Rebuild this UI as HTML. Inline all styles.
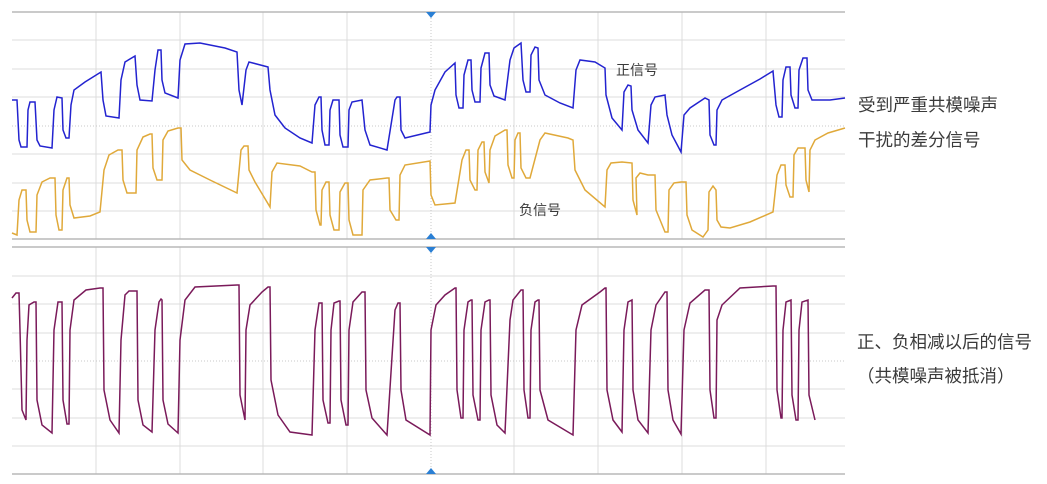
<!DOCTYPE html>
<html><head><meta charset="utf-8"><style>
html,body{margin:0;padding:0;background:#fff;width:1047px;height:484px;overflow:hidden}
svg{display:block}
text{font-family:"Liberation Sans","Noto Sans CJK SC",sans-serif;fill:#3a3a3a}
</style></head><body>
<svg width="1047" height="484" viewBox="0 0 1047 484" xmlns="http://www.w3.org/2000/svg">
<g stroke="#dcdcdc" stroke-width="1" fill="none">
<path d="M96 12V239M180 12V239M263 12V239M347 12V239M514 12V239M598 12V239M682 12V239M766 12V239"/>
<path d="M96 247V474M180 247V474M263 247V474M347 247V474M514 247V474M598 247V474M682 247V474M766 247V474"/>
<path d="M12 40H845M12 69H845M12 97H845M12 154H845M12 183H845M12 211H845"/>
<path d="M12 276H845M12 304H845M12 333H845M12 389H845M12 418H845M12 446H845"/>
</g>
<g stroke="#b8b8b8" stroke-width="1.5" fill="none">
<path d="M12 12H845M12 239H845M12 247H845M12 474H845"/>
</g>
<g stroke="#c8c8c8" stroke-width="1" stroke-dasharray="1 2" fill="none">
<path d="M12 126H845M12 361H845M431 12V239M431 247V474"/>
</g>
<g fill="#2a7fd4">
<path d="M426 12h10l-5 6z"/><path d="M426 239h10l-5 -6z"/>
<path d="M426 247h10l-5 6z"/><path d="M426 474h10l-5 -6z"/>
</g>
<polyline fill="none" stroke="#2323d0" stroke-width="1.5" points="12,100 17,100 19,140 21,147 27,147 28,110 30,102 35,102 37,140 40,146 52,148 54,110 57,97 62,98 63,130 66,138 69,138 71,105 74,90 85,82 101,72 103,100 106,116 119,118 121,80 125,62 135,56 137,85 140,100 152,101 155,70 158,50 161,50 162,80 165,93 178,98 180,60 185,44 200,43 225,48 237,52 239,90 242,105 246,70 249,62 268,67 270,90 275,115 285,128 300,138 312,143 315,105 319,97 321,97 322,130 325,145 329,145 330,110 333,100 339,100 340,135 343,147 348,147 349,110 352,102 362,100 365,130 370,145 387,150 395,100 397,97 400,97 401,130 405,138 430,132 431,105 435,90 445,72 455,63 456,95 459,108 463,108 464,75 468,60 471,60 472,90 475,102 480,102 481,68 485,53 489,53 490,85 494,96 505,100 510,60 514,48 521,43 523,80 526,92 530,92 531,55 535,47 538,48 539,80 545,95 560,103 573,108 576,70 580,60 595,62 605,68 606,95 612,118 622,130 624,92 628,85 631,86 632,110 638,130 648,143 651,105 655,97 665,95 667,115 672,135 681,152 684,115 690,108 705,98 709,100 710,135 714,145 716,145 717,110 722,100 740,90 760,79 773,71 776,105 779,117 782,117 783,80 786,67 790,67 791,95 795,108 798,108 799,70 803,58 807,58 808,90 812,100 830,100 845,98"/>
<polyline fill="none" stroke="#e0a93a" stroke-width="1.5" points="12,233 17,235 19,200 22,190 26,190 27,220 30,232 36,232 37,195 42,182 50,178 55,178 56,215 59,230 62,230 63,190 67,178 69,178 70,205 74,218 90,216 100,212 104,170 109,155 118,150 122,150 123,180 127,193 136,193 137,150 143,137 150,134 152,134 153,168 157,180 162,180 163,140 168,131 178,128 181,128 182,160 190,170 210,180 237,193 241,150 244,146 248,146 249,170 255,182 270,207 272,172 277,163 300,166 312,172 315,172 316,210 320,225 321,225 322,190 326,182 329,182 330,215 334,230 339,230 340,192 345,183 348,183 349,220 353,235 362,235 363,190 370,180 387,178 389,178 390,210 396,220 399,220 400,175 405,165 430,161 431,195 435,205 455,203 462,160 466,150 469,150 470,180 475,190 477,190 478,150 482,142 484,142 485,172 489,183 490,150 495,136 505,130 507,130 508,165 512,178 514,178 515,140 518,133 520,133 521,168 526,178 530,178 540,140 545,133 568,138 573,140 575,170 585,190 605,207 607,170 611,163 622,162 632,163 633,200 637,215 636,178 640,173 648,175 655,175 656,210 665,232 668,232 669,190 674,183 681,182 686,182 687,215 692,230 703,237 708,230 709,192 713,186 716,190 717,220 721,227 730,228 750,222 773,212 777,175 781,165 785,165 786,185 790,197 793,197 794,155 798,148 805,148 806,180 809,192 810,150 815,140 828,133 845,128"/>
<polyline fill="none" stroke="#7a1a5a" stroke-width="1.5" points="12,298 16,293 19,293 20,330 22,410 26,420 27,340 29,305 34,302 36,302 37,400 42,425 52,433 54,330 58,302 62,302 63,400 67,424 69,424 70,330 74,300 86,290 100,288 103,288 104,390 110,420 119,433 121,340 125,295 129,291 137,291 138,400 143,425 152,432 155,330 159,302 161,299 162,300 163,400 168,424 178,433 180,340 185,300 195,287 237,285 239,285 240,395 245,420 246,330 250,305 262,292 268,287 270,287 271,380 278,415 290,432 312,435 315,330 319,303 322,303 323,400 328,423 330,423 331,330 334,303 339,301 340,301 341,400 346,425 348,425 349,330 353,302 362,292 365,292 366,390 372,418 387,435 395,310 398,303 400,303 401,390 406,420 430,435 431,330 436,305 445,295 455,288 456,288 457,390 461,418 463,418 464,330 468,302 471,300 472,300 473,395 478,420 480,420 481,330 485,302 489,300 490,300 491,395 497,425 505,433 510,320 513,300 521,290 523,290 524,390 528,418 530,418 531,330 535,302 538,300 539,300 540,390 548,420 573,435 576,330 582,305 600,292 605,288 606,288 607,390 613,420 622,432 624,330 628,302 632,300 633,390 638,420 648,433 651,330 656,305 665,292 667,292 668,390 673,420 681,434 684,330 690,303 705,290 709,290 710,390 714,418 716,418 717,320 722,305 740,288 773,286 776,286 777,390 781,418 782,418 783,330 786,302 791,300 792,395 796,420 798,420 799,330 802,302 808,300 809,395 815,420"/>
<text x="616" y="75" font-size="14">正信号</text>
<text x="519" y="215" font-size="14">负信号</text>
<text x="858" y="111" font-size="17.5">受到严重共模噪声</text>
<text x="858" y="146" font-size="17.5">干扰的差分信号</text>
<text x="857" y="348" font-size="17.5">正、负相减以后的信号</text>
<text x="857" y="382" font-size="17.5">（共模噪声被抵消）</text>
</svg>
</body></html>
